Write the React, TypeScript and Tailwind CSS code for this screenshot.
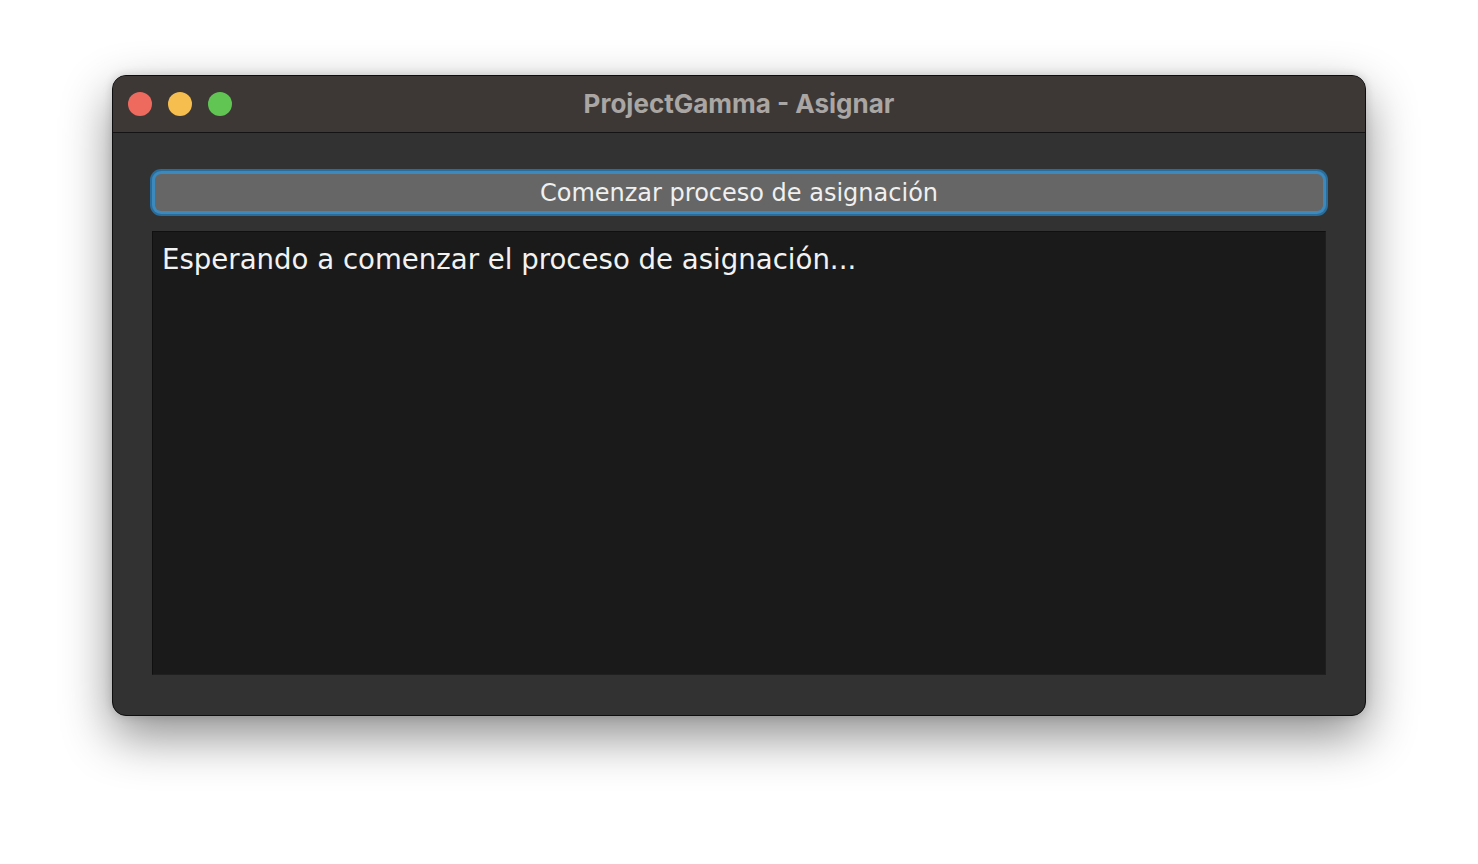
export default function App() {
  return (
    <div className="w-[1478px] h-[864px] bg-white pt-[75px] pl-[112px]" style={{ fontFamily: '"DejaVu Sans", "Lato", sans-serif' }}>
      <div className="w-[1254px] h-[641px] rounded-[14px] border border-[#0e0e0e] bg-[#323232] overflow-hidden flex flex-col shadow-[0_20px_50px_rgba(0,0,0,0.45),0_0_10px_rgba(0,0,0,0.15)]">
        <div className="h-[57px] bg-[#3d3836] border-b border-[#141414] flex items-center relative shrink-0">
          <div className="flex items-center gap-[16px] pl-[15px]">
            <div className="w-[24px] h-[24px] rounded-full bg-[#ee6a5f]" />
            <div className="w-[24px] h-[24px] rounded-full bg-[#f5be4f]" />
            <div className="w-[24px] h-[24px] rounded-full bg-[#61c554]" />
          </div>
          <div className="absolute inset-0 flex items-center justify-center pointer-events-none pb-[2px]">
            <span className="text-[26px] font-bold text-[#aaa6a3]" style={{ fontFamily: 'Inter, "Liberation Sans", sans-serif' }}>
              ProjectGamma - Asignar
            </span>
          </div>
        </div>
        <div className="flex-1 flex flex-col px-[37px] pt-[36px] pb-[40px]">
          <div className="h-[47px] rounded-[11px] bg-[#2a6c9a] p-[2px] shrink-0">
            <div className="h-full rounded-[9px] bg-[#3b89bd] p-[3px]">
              <div className="h-full rounded-[6px] bg-[#666666] flex items-center justify-center">
                <span className="text-[24px] text-[#f0f0f0] leading-none">Comenzar proceso de asignación</span>
              </div>
            </div>
          </div>
          <div className="mt-[15px] mx-[2px] flex-1 bg-[#1a1a1a] border border-[#101010] border-r-[#1f1f1f] border-b-[#202020] px-[9px] pt-[11px]">
            <div className="text-[27.6px] text-[#f2f2f2] leading-[34px]">Esperando a comenzar el proceso de asignación...</div>
          </div>
        </div>
      </div>
    </div>
  );
}
